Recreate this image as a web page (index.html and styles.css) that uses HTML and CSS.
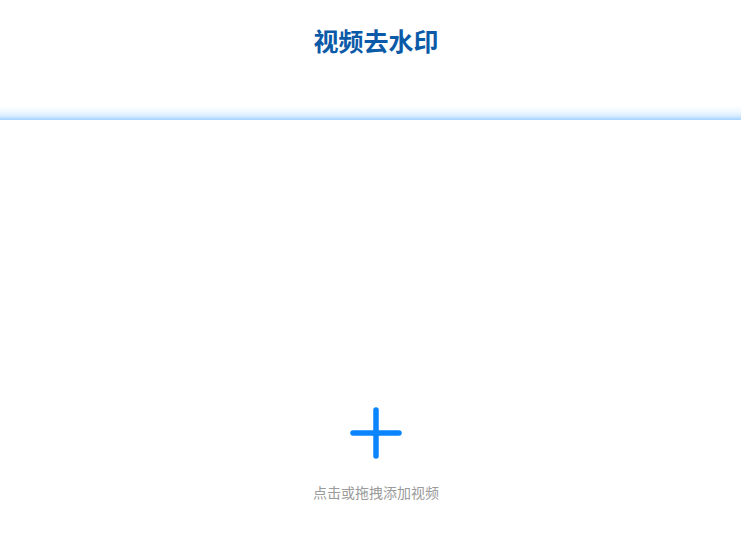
FILE: index.html
```html
<!DOCTYPE html>
<html lang="zh-CN">
<head>
<meta charset="utf-8">
<title>视频去水印</title>
<link rel="stylesheet" href="styles.css">
</head>
<body>
<header class="header">
  <h1 class="title">视频去水印</h1>
</header>
<main class="main">
  <div class="upload">
    <svg class="plus" width="52" height="52" viewBox="0 0 52 52" aria-hidden="true">
      <path d="M26 3 V49 M3 26 H49" stroke="#0a84ff" stroke-width="5.5" stroke-linecap="round" fill="none"/>
    </svg>
    <p class="hint">点击或拖拽添加视频</p>
  </div>
</main>
</body>
</html>
```

FILE: styles.css
```css
html, body {
  margin: 0;
  padding: 0;
  background: #ffffff;
  font-family: "Noto Sans CJK SC", "Noto Sans", sans-serif;
}

.header {
  height: 120px;
  box-sizing: border-box;
  padding: 25px 0 0 11px;
  background: linear-gradient(to bottom, #ffffff 0, #ffffff 106px, #eef7ff 112px, #d6ecff 116px, #aed8ff 119px, #a8d4ff 120px);
}

.title {
  margin: 0;
  text-align: center;
  font-size: 25px;
  line-height: 30px;
  font-weight: 700;
  color: #0b5aa8;
}

.main {
  display: flex;
  justify-content: center;
  padding-left: 11px;
}

.upload {
  display: flex;
  flex-direction: column;
  align-items: center;
  margin-top: 287px;
  cursor: pointer;
}

.plus {
  display: block;
}

.hint {
  margin: 23px 0 0;
  font-size: 14px;
  line-height: 20px;
  color: #9a9a9a;
}
```
